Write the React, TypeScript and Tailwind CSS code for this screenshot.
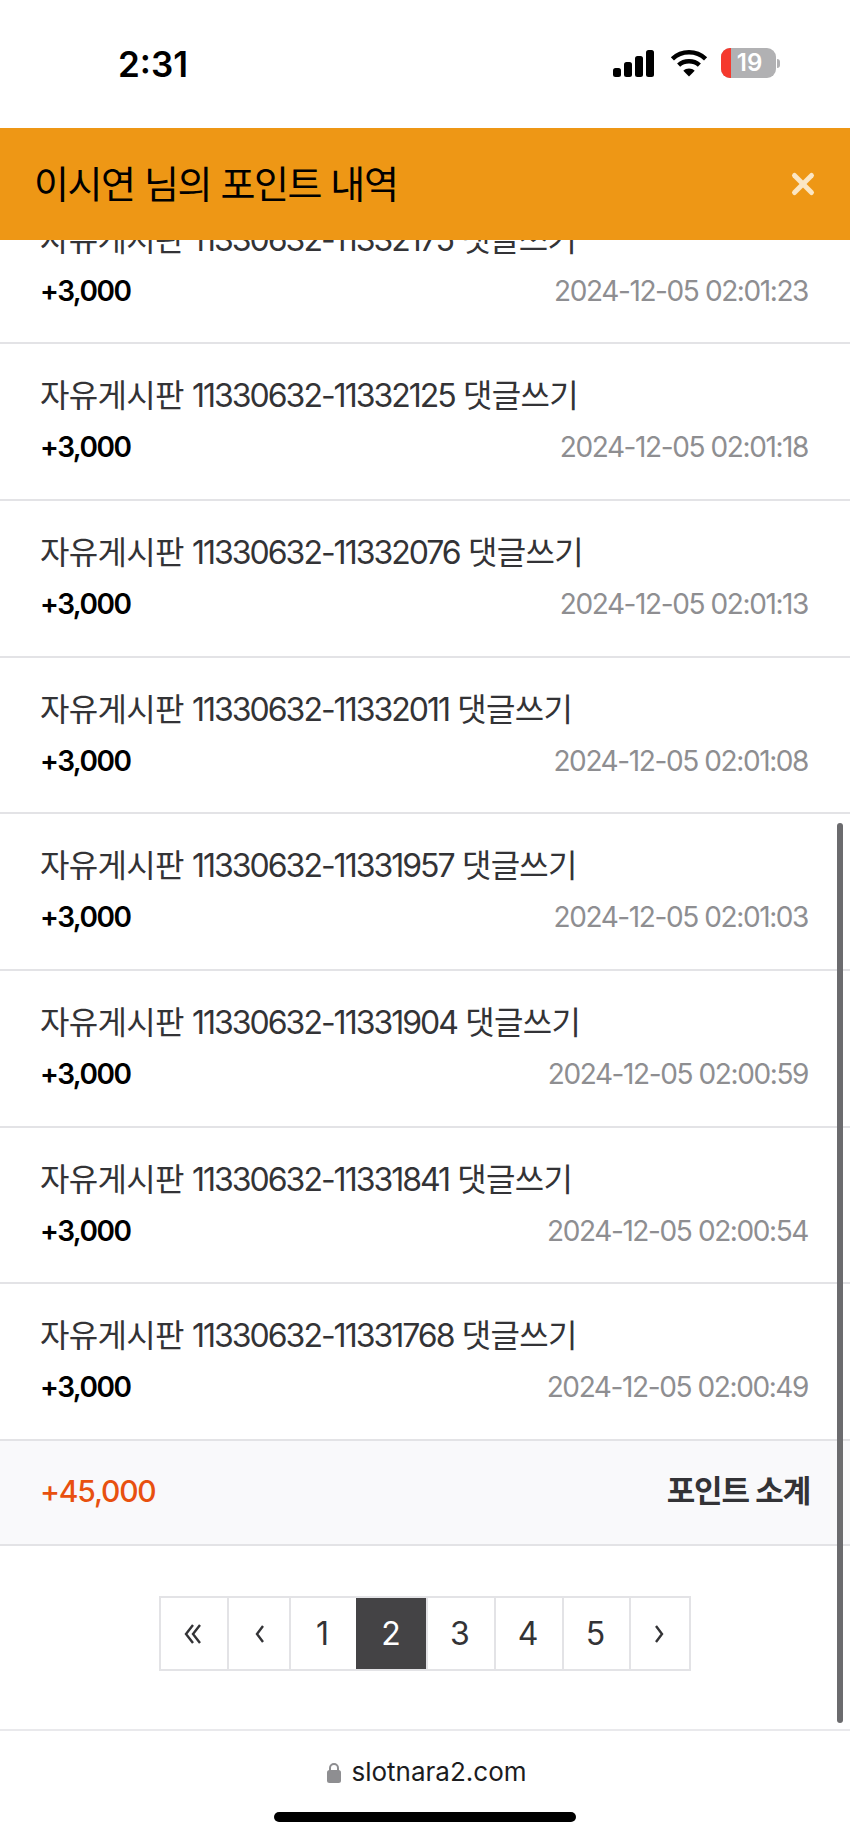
import React from 'react';
import { X } from 'lucide-react';

interface PointRow {
  id: string;
  time: string;
}

const rows: PointRow[] = [
  { id: '11330632-11332175', time: '2024-12-05 02:01:23' },
  { id: '11330632-11332125', time: '2024-12-05 02:01:18' },
  { id: '11330632-11332076', time: '2024-12-05 02:01:13' },
  { id: '11330632-11332011', time: '2024-12-05 02:01:08' },
  { id: '11330632-11331957', time: '2024-12-05 02:01:03' },
  { id: '11330632-11331904', time: '2024-12-05 02:00:59' },
  { id: '11330632-11331841', time: '2024-12-05 02:00:54' },
  { id: '11330632-11331768', time: '2024-12-05 02:00:49' },
];

const StatusIcons = () => (
  <div className="flex items-center">
    <svg className="mr-[15px]" width="42" height="27" viewBox="0 0 42 27" fill="#000">
      <rect x="0" y="18" width="8" height="9" rx="2.5" />
      <rect x="11" y="12" width="8" height="15" rx="2.5" />
      <rect x="22" y="6" width="8" height="21" rx="2.5" />
      <rect x="33" y="0" width="8" height="27" rx="2.5" />
    </svg>
    <svg className="mr-[13px]" width="38" height="28" viewBox="0 0 36 27" fill="none" stroke="#000" strokeWidth="4.4">
      <path d="M2 9.5C11 1 25 1 34 9.5" />
      <path d="M8 15.5C13.500 10.500 22.500 10.500 28 15.500" />
      <path d="M18 26.500L12.500 21C15.500 18 20.500 18 23.500 21Z" fill="#000" stroke="none" />
    </svg>
    <div className="flex items-center gap-[1px]">
      <div className="relative flex h-[30px] w-[55px] items-center justify-center overflow-hidden rounded-[9px] bg-[#b1b1b3] pl-[2px]">
        <div className="absolute inset-y-0 left-0 w-[10px] bg-[#f5392e]" />
        <span className="relative text-[24px] font-semibold leading-[30px] text-white">19</span>
      </div>
      <div className="h-[9px] w-[3px] rounded-r-full bg-[#b1b1b3]" />
    </div>
  </div>
);

const Row = ({ row }: { row: PointRow }) => (
  <div className="h-[156.700px] shrink-0 border-b-2 border-[#e3e3e6] pl-[40px] pr-[42px] pt-[30px]">
    <div className="whitespace-nowrap text-[32px] leading-[44px] tracking-[-0.700px] text-[#333336]">
      자유게시판 <span className="tracking-[-2px]">{row.id}</span> 댓글쓰기
    </div>
    <div className="mt-[7px] flex items-center justify-between">
      <span className="text-[28px] font-semibold leading-[44px] tracking-[-1.500px] text-black">+3,000</span>
      <span className="text-[28px] leading-[44px] tracking-[-1.400px] text-[#8e8e91]">{row.time}</span>
    </div>
  </div>
);

const PageCell = ({ width, active, children }: { width: string; active?: boolean; children: React.ReactNode }) => (
  <div
    className={`flex h-full items-center justify-center border-l-2 pr-[2px] first:border-l-0 ${width} ${
      active ? 'border-[#444345] bg-[#444345] text-white' : 'border-[#e3e3e6] text-[#333336]'
    }`}
  >
    {children}
  </div>
);

const Arrow = ({ d }: { d: string }) => (
  <svg width="24" height="26" viewBox="0 0 24 26" fill="none" stroke="#333336" strokeWidth="2.400">
    <path d={d} />
  </svg>
);

export default function App() {
  return (
    <div className="relative flex h-[1843px] w-[850px] flex-col overflow-hidden bg-white font-['Inter','Noto_Sans_CJK_KR',sans-serif]">
      <div className="flex h-[128px] shrink-0 items-start justify-between pl-[118px] pr-[70px] pt-[42px]">
        <span className="text-[35px] font-semibold leading-[44px] text-black">2:31</span>
        <div className="pt-[6px]">
          <StatusIcons />
        </div>
      </div>

      <div className="z-10 flex h-[112px] shrink-0 items-center justify-between bg-[#ee9715] pl-[34px] pr-[30px]">
        <h1 className="text-[38px] font-normal tracking-[-1.400px] text-black">이시연 님의 포인트 내역</h1>
        <X className="text-[#fbe6c4]" size={34} strokeWidth={3.500} />
      </div>

      <div className="flex h-[1201px] shrink-0 flex-col justify-end overflow-hidden">
        {rows.map((row) => (
          <Row key={row.time} row={row} />
        ))}
      </div>

      <div className="flex h-[105px] shrink-0 items-center justify-between border-b-2 border-[#e3e3e6] bg-[#f9f9fb] pb-[3px] pl-[40px] pr-[40px]">
        <span className="text-[30px] font-medium tracking-[-1.200px] text-[#e8500f]">+45,000</span>
        <span className="text-[31px] font-semibold tracking-[-1.200px] text-[#333336]">포인트 소계</span>
      </div>

      <div className="flex h-[185px] shrink-0 items-start justify-center border-b-2 border-[#e9e9ec] pt-[50px]">
        <div className="flex h-[75px] w-[532px] border-2 border-[#e3e3e6] text-[32px]">
          <PageCell width="w-[66px]"><Arrow d="M12 4L5 13L12 22M19 4L12 13L19 22" /></PageCell>
          <PageCell width="w-[62px]"><Arrow d="M17 5L11 13L17 21" /></PageCell>
          <PageCell width="w-[67px]">1</PageCell>
          <PageCell width="w-[70px]" active>2</PageCell>
          <PageCell width="w-[68px]">3</PageCell>
          <PageCell width="w-[68px]">4</PageCell>
          <PageCell width="w-[67px]">5</PageCell>
          <PageCell width="w-[60px]"><Arrow d="M9 5L15 13L9 21" /></PageCell>
        </div>
      </div>

      <div className="flex flex-1 flex-col items-center pt-[24px]">
        <div className="ml-[4px] flex items-center gap-[10px]">
          <svg width="14" height="21" viewBox="0 0 14 21">
            <path d="M3 9V6a4 4 0 0 1 8 0v3" fill="none" stroke="#8e8e91" strokeWidth="2" />
            <rect x="0" y="8" width="14" height="13" rx="2.500" fill="#8e8e91" />
          </svg>
          <span className="text-[26px] leading-[34px] text-[#1c1c1e]">slotnara2.com</span>
        </div>
        <div className="mt-[23px] h-[10px] w-[302px] rounded-full bg-black" />
      </div>

      {/* overlay scrollbar */}
      <div className="absolute left-[837px] top-[823px] h-[900px] w-[6px] rounded-full bg-[#6b6b6e]" />
    </div>
  );
}
